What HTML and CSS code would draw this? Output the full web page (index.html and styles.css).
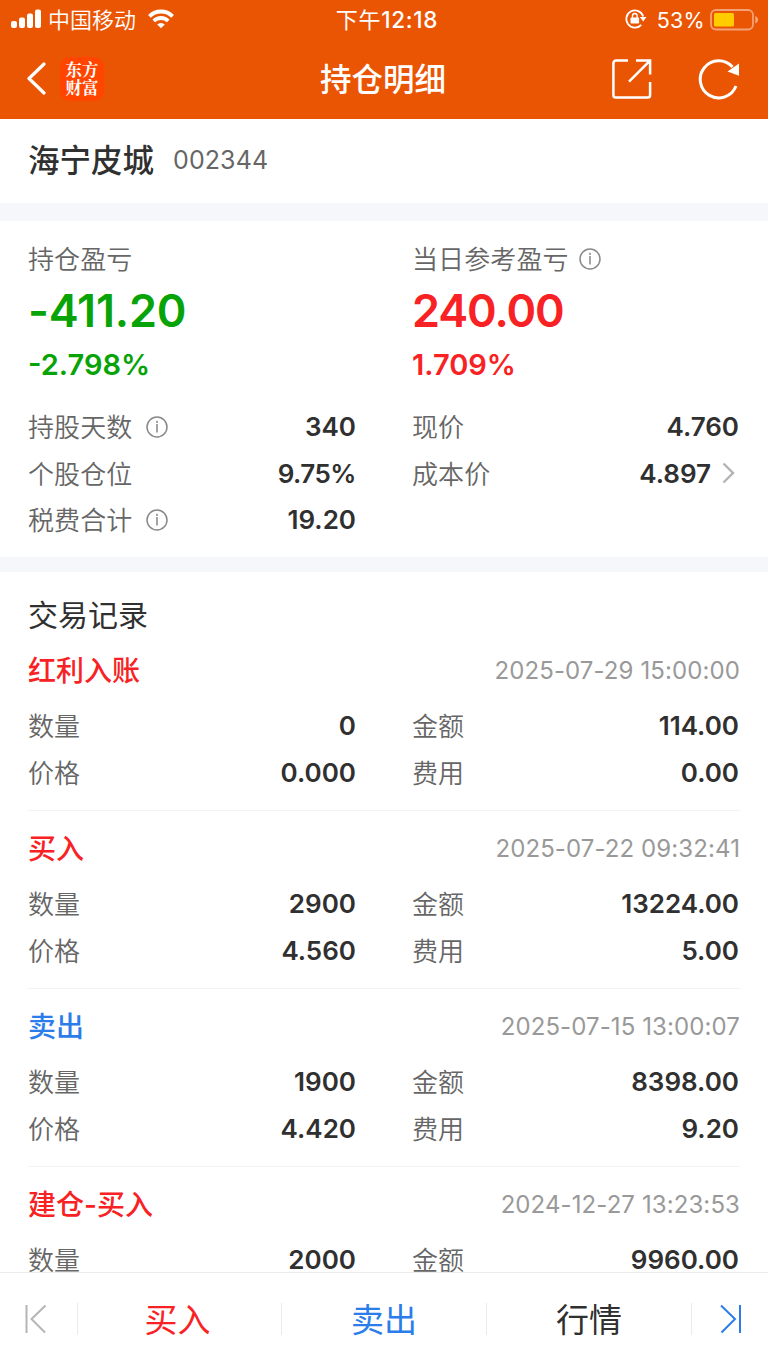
FILE: index.html
```html
<!DOCTYPE html>
<html lang="zh-CN">
<head>
    <meta charset="UTF-8">
    <meta name="viewport" content="width=device-width, initial-scale=1.0">
    <title>持仓明细</title>
    <link rel="stylesheet" href="styles.css">
</head>
<body>
    <header class="header">
        <div class="status-bar">
            <div class="status-left">
                <svg class="signal" width="31" height="20" viewBox="0 0 31 20" fill="#fff">
                    <rect x="0" y="12" width="6" height="7" rx="2"/>
                    <rect x="8" y="8.500" width="6" height="10.500" rx="2"/>
                    <rect x="16" y="4.500" width="6" height="14.500" rx="2"/>
                    <rect x="24" y="0.500" width="6" height="18.500" rx="2"/>
                </svg>
                <span class="carrier">中国移动</span>
                <svg class="wifi" width="26" height="20" viewBox="0 0 26 20" fill="none" stroke="#fff" stroke-width="3.800">
                    <path d="M1.400 7.300a16.400 16.400 0 0 1 23.200 0"/>
                    <path d="M5.800 12a10.200 10.200 0 0 1 14.400 0"/>
                    <path d="M9.200 15.500a5.400 5.400 0 0 1 7.600 0L13 19.300z" fill="#fff" stroke="none"/>
                </svg>
            </div>
            <div class="status-time">下午<b>12:18</b></div>
            <div class="status-right">
                <svg class="lock" width="22" height="20" viewBox="0 0 22 20" fill="none" stroke="#fff" stroke-width="1.800">
                    <path d="M18.200 7.500A8.600 8.600 0 1 0 16.300 15.800"/>
                    <path d="M14.800 8h6.700l-3.300 4.600z" fill="#fff" stroke="none"/>
                    <rect x="5.500" y="8.500" width="8.600" height="6" rx="1" fill="#fff" stroke="none"/>
                    <path d="M7.500 9V6.800a2.300 2.300 0 0 1 4.600 0V9" stroke-width="1.400"/>
                </svg>
                <span class="percent">53%</span>
                <svg class="battery" width="49" height="22" viewBox="0 0 49 22">
                    <rect x="1" y="1" width="42" height="19.500" rx="5" fill="none" stroke="#fff" stroke-opacity=".45" stroke-width="1.800"/>
                    <rect x="4" y="4" width="20" height="13.500" rx="1.500" fill="#ffcc00"/>
                    <path d="M45.300 7v7.500c3.600-1.500 3.600-6 0-7.500z" fill="#fff" fill-opacity=".5"/>
                </svg>
            </div>
        </div>
        <div class="nav-bar">
            <div class="nav-left">
                <svg width="20" height="34" viewBox="0 0 20 34" fill="none" stroke="#fff" stroke-width="3.200" stroke-linecap="round" stroke-linejoin="round">
                    <path d="M18 2L3 16.500L18 31"/>
                </svg>
                <div class="logo"><span>东方</span><span>财富</span></div>
            </div>
            <h1>持仓明细</h1>
            <div class="nav-right">
                <svg width="40" height="40" viewBox="0 0 40 40" fill="none" stroke="#fff" stroke-width="2.500">
                    <path d="M16 1.600H4a2.600 2.600 0 0 0-2.600 2.600V36A2.600 2.600 0 0 0 4 38.600H35.500A2.600 2.600 0 0 0 38.100 36V23"/>
                    <path d="M24 1.600H38.100V15.500M38 1.700L17 22.700"/>
                </svg>
                <svg width="42" height="42" viewBox="0 0 42 42" fill="none" stroke="#fff" stroke-width="3">
                    <path d="M34.500 9A18.500 18.500 0 1 0 38 28"/>
                    <path d="M41 5.500V17.700L29.500 13.600z" fill="#fff" stroke="none"/>
                </svg>
            </div>
        </div>
    </header>

    <main class="content">
        <section class="stock">
            <h2>海宁皮城</h2>
            <span class="code">002344</span>
        </section>

        <section class="summary">
            <div class="profits">
                <div class="profit green">
                    <div class="label">持仓盈亏</div>
                    <div class="amount">-411.20</div>
                    <div class="rate">-2.798%</div>
                </div>
                <div class="profit red">
                    <div class="label">当日参考盈亏
                        <svg class="info near" viewBox="0 0 22 22"><circle cx="11" cy="11" r="10"/><path d="M11 8v8.500M11 4.700v2.200"/></svg>
                    </div>
                    <div class="amount">240.00</div>
                    <div class="rate">1.709%</div>
                </div>
            </div>
            <div class="grid">
                <div class="item"><span class="label">持股天数
                    <svg class="info" viewBox="0 0 22 22"><circle cx="11" cy="11" r="10"/><path d="M11 8v8.500M11 4.700v2.200"/></svg></span>
                    <span class="value">340</span></div>
                <div class="item"><span class="label">现价</span><span class="value">4.760</span></div>
                <div class="item"><span class="label">个股仓位</span><span class="value percentage">9.75%</span></div>
                <div class="item"><span class="label">成本价</span><span class="value">4.897
                    <svg class="more" width="14" height="22" viewBox="0 0 14 22" fill="none" stroke="#b3b3b3" stroke-width="2.400"><path d="M1.500 1.500L11 11L1.500 20.500"/></svg></span></div>
                <div class="item"><span class="label">税费合计
                    <svg class="info" viewBox="0 0 22 22"><circle cx="11" cy="11" r="10"/><path d="M11 8v8.500M11 4.700v2.200"/></svg></span>
                    <span class="value">19.20</span></div>
            </div>
        </section>

        <section class="records">
            <h3>交易记录</h3>
            <div class="record">
                <div class="record-head"><span class="type red">红利入账</span><span class="time">2025-07-29 15:00:00</span></div>
                <div class="grid">
                    <div class="item"><span class="label">数量</span><span class="value">0</span></div>
                    <div class="item"><span class="label">金额</span><span class="value">114.00</span></div>
                    <div class="item"><span class="label">价格</span><span class="value">0.000</span></div>
                    <div class="item"><span class="label">费用</span><span class="value">0.00</span></div>
                </div>
            </div>
            <div class="record">
                <div class="record-head"><span class="type red">买入</span><span class="time">2025-07-22 09:32:41</span></div>
                <div class="grid">
                    <div class="item"><span class="label">数量</span><span class="value">2900</span></div>
                    <div class="item"><span class="label">金额</span><span class="value">13224.00</span></div>
                    <div class="item"><span class="label">价格</span><span class="value">4.560</span></div>
                    <div class="item"><span class="label">费用</span><span class="value">5.00</span></div>
                </div>
            </div>
            <div class="record">
                <div class="record-head"><span class="type blue">卖出</span><span class="time">2025-07-15 13:00:07</span></div>
                <div class="grid">
                    <div class="item"><span class="label">数量</span><span class="value">1900</span></div>
                    <div class="item"><span class="label">金额</span><span class="value">8398.00</span></div>
                    <div class="item"><span class="label">价格</span><span class="value">4.420</span></div>
                    <div class="item"><span class="label">费用</span><span class="value">9.20</span></div>
                </div>
            </div>
            <div class="record">
                <div class="record-head"><span class="type red">建仓-买入</span><span class="time">2024-12-27 13:23:53</span></div>
                <div class="grid">
                    <div class="item"><span class="label">数量</span><span class="value">2000</span></div>
                    <div class="item"><span class="label">金额</span><span class="value">9960.00</span></div>
                </div>
            </div>
        </section>
    </main>

    <footer class="tab-bar">
        <div class="tab side prev">
            <svg width="22" height="30" viewBox="0 0 22 30" fill="none" stroke="#b5b5b5" stroke-width="2"><path d="M1.500 1V29M20.500 1.500L6.500 15L20 28.500"/></svg>
        </div>
        <div class="tab buy red">买入</div>
        <div class="tab blue">卖出</div>
        <div class="tab">行情</div>
        <div class="tab side next">
            <svg width="22" height="30" viewBox="0 0 22 30" fill="none" stroke="#2b7de9" stroke-width="2"><path d="M20 1V29M1 1.500L15 15L1.500 28.500"/></svg>
        </div>
    </footer>
</body>
</html>
```
FILE: styles.css
```css
:root {
    --orange: #ea5504;
    --red: #f82224;
    --green: #07a307;
    --blue: #2b7de9;
    --text: #303030;
    --label: #666;
    --gap: #f6f7fa;
}

* {
    box-sizing: border-box;
}

body {
    margin: 0;
    height: 1366px;
    display: flex;
    flex-direction: column;
    overflow: hidden;
    background: #fff;
    color: var(--text);
    font-family: Inter, "Noto Sans CJK SC", sans-serif;
}

h1, h2, h3 {
    margin: 0;
}

svg {
    flex: none;
}

.red {
    color: var(--red);
}

.green {
    color: var(--green);
}

.blue {
    color: var(--blue);
}

.header {
    flex: none;
    height: 119px;
    background: var(--orange);
    color: #fff;
}

.status-bar,
.nav-bar {
    display: grid;
    grid-template-columns: 1fr auto 1fr;
    align-items: center;
}

.status-bar {
    height: 40px;
    padding: 0 9px 0 11px;
    font-size: 22px;
}

.status-left,
.status-right,
.nav-left,
.nav-right {
    display: flex;
    align-items: center;
}

.status-right,
.nav-right {
    justify-content: flex-end;
}

.signal,
.wifi {
    margin-bottom: 2px;
}

.carrier {
    margin: 0 12px 0 6px;
    padding-bottom: 4px;
    font-weight: 350;
}

.status-time {
    padding: 0 0 4px 4px;
    letter-spacing: 0.7px;
}

.status-time b {
    font-size: 22.5px;
    font-weight: 500;
}

.lock {
    margin-bottom: 2px;
}

.percent {
    margin: 0 5px 0 10px;
    font-size: 21.5px;
    letter-spacing: 0.3px;
}

.nav-bar {
    height: 78px;
    padding: 0 28px 0 26px;
}

.nav-left {
    gap: 14px;
}

.nav-right {
    gap: 46px;
}

.logo {
    width: 44px;
    height: 44px;
    padding-top: 3px;
    border-radius: 10px;
    background: #ff4500;
    font-family: "Noto Serif CJK SC", "Noto Sans CJK SC", serif;
    font-size: 16.5px;
    font-weight: 700;
    line-height: 18px;
    text-align: center;
}

.logo span {
    display: block;
}

h1 {
    padding-bottom: 4px;
    font-size: 31.5px;
    font-weight: 500;
}

.content {
    flex: 1;
    min-height: 0;
    overflow: hidden;
}

.stock {
    display: flex;
    align-items: center;
    height: 84px;
    padding: 0 29px 2px 28px;
}

.stock h2 {
    padding-bottom: 4px;
    font-size: 31.5px;
    font-weight: 500;
}

.code {
    margin-left: 19px;
    color: var(--label);
    font-size: 25px;
    letter-spacing: 0.1px;
}

.summary {
    height: 369px;
    padding: 19px 28px 0;
    border-top: 18px solid var(--gap);
    border-bottom: 15px solid var(--gap);
}

.profits,
.grid {
    display: grid;
    grid-template-columns: 328px 327px;
    column-gap: 56px;
}

.label {
    display: flex;
    align-items: center;
    padding-top: 2px;
    color: var(--label);
    font-size: 26px;
    font-weight: 350;
    letter-spacing: 0.1px;
    line-height: 38px;
}

.profit .label {
    padding-top: 1px;
}

.info {
    width: 22px;
    height: 22px;
    margin: 0 0 2px 14px;
    fill: none;
    stroke: #888;
    stroke-width: 1.5;
}

.info.near {
    margin-left: 10px;
}

.amount {
    height: 65px;
    font-size: 45px;
    font-weight: 600;
    letter-spacing: -0.2px;
    line-height: 64px;
}

.red .amount {
    letter-spacing: -1.1px;
}

.rate {
    height: 42px;
    font-size: 29px;
    font-weight: 600;
    line-height: 41px;
}

.summary .grid {
    margin-top: 18px;
}

.item {
    display: flex;
    align-items: center;
    justify-content: space-between;
    height: 46.5px;
}

.value {
    display: flex;
    align-items: center;
    padding-bottom: 1px;
    font-size: 26px;
    font-weight: 600;
}

.value.percentage {
    letter-spacing: -0.5px;
}

.more {
    margin: 0 3px 0 11px;
}

.records {
    padding: 0 28px;
}

h3 {
    height: 61px;
    padding-top: 25px;
    font-size: 30px;
    font-weight: 400;
    line-height: 36px;
}

.record {
    height: 178px;
    padding-top: 5px;
    border-bottom: 1px solid #f3f3f3;
}

.record-head {
    display: flex;
    align-items: center;
    justify-content: space-between;
    height: 65px;
}

.type {
    padding-bottom: 3px;
    font-size: 28px;
    font-weight: 500;
}

.time {
    color: #999;
    font-size: 24px;
    letter-spacing: 0.1px;
}

.tab-bar {
    flex: none;
    display: flex;
    height: 94px;
    padding-top: 30px;
    border-top: 1px solid #ececec;
    background: #fff;
}

.tab {
    flex: 1;
    display: flex;
    align-items: center;
    justify-content: center;
    height: 32px;
    padding-bottom: 3px;
    border-right: 1px solid #ebebeb;
    font-size: 33px;
}

.buy {
    flex: 0 0 204px;
    padding-right: 4px;
}

.side {
    flex: 0 0 78px;
    padding-bottom: 0;
}

.prev {
    padding-right: 6px;
}

.next {
    flex-basis: 76px;
    padding-left: 2px;
    border-right: none;
}
```
